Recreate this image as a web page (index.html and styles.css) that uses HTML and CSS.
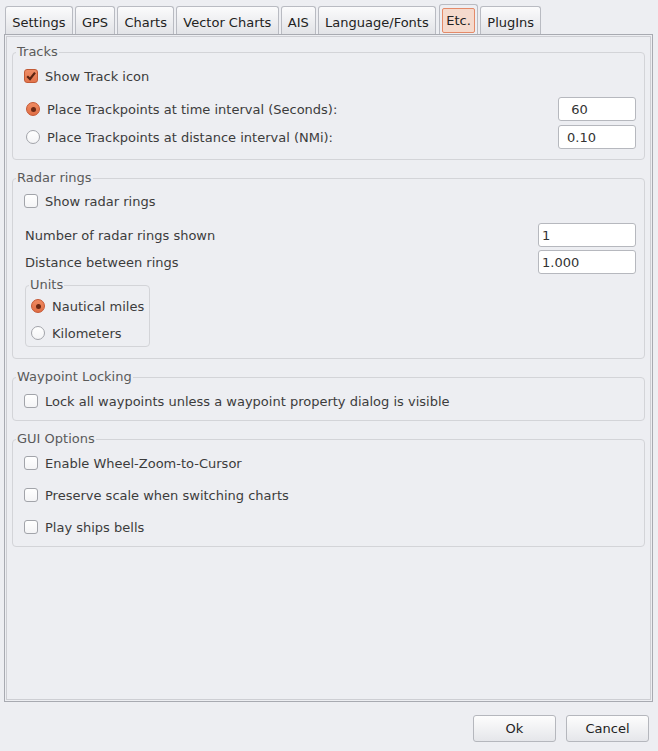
FILE: index.html
```html
<!DOCTYPE html>
<html>
<head>
<meta charset="utf-8">
<title>Options</title>
<link rel="stylesheet" href="styles.css">
</head>
<body>
<div class="dialog">
  <div class="tabs">
    <div class="tab">Settings</div>
    <div class="tab">GPS</div>
    <div class="tab">Charts</div>
    <div class="tab">Vector Charts</div>
    <div class="tab">AIS</div>
    <div class="tab">Language/Fonts</div>
    <div class="tab tab-active"><span class="tab-focus">Etc.</span></div>
    <div class="tab">PlugIns</div>
  </div>
  <div class="pane">
    <fieldset class="group group-tracks">
      <legend>Tracks</legend>
      <div class="gbody">
        <div class="row"><span class="cb cb-on"><svg viewBox="0 0 14 14" width="14" height="14"><path d="M3.2 7.2 L6 10 L11 3.6" fill="none" stroke="#5a2412" stroke-width="2.2"/></svg></span><span>Show Track icon</span></div>
        <div class="row row-field row-first">
          <div class="opt"><span class="rb rb-on"></span><span>Place Trackpoints at time interval (Seconds):</span></div>
          <div class="field field-track">&nbsp;60</div>
        </div>
        <div class="row row-field row-next">
          <div class="opt"><span class="rb"></span><span>Place Trackpoints at distance interval (NMi):</span></div>
          <div class="field field-track">0.10</div>
        </div>
      </div>
    </fieldset>

    <fieldset class="group group-radar">
      <legend>Radar rings</legend>
      <div class="gbody">
        <div class="row"><span class="cb"></span><span>Show radar rings</span></div>
        <div class="row row-field row-first-radar">
          <span class="plain">Number of radar rings shown</span>
          <div class="field field-radar">1</div>
        </div>
        <div class="row row-field row-next-radar">
          <span class="plain">Distance between rings</span>
          <div class="field field-radar">1.000</div>
        </div>
        <fieldset class="group units">
          <legend>Units</legend>
          <div class="ubody">
            <div class="row"><span class="rb rb-on"></span><span>Nautical miles</span></div>
            <div class="row row-units-next"><span class="rb"></span><span>Kilometers</span></div>
          </div>
        </fieldset>
      </div>
    </fieldset>

    <fieldset class="group group-wp">
      <legend>Waypoint Locking</legend>
      <div class="gbody">
        <div class="row"><span class="cb"></span><span>Lock all waypoints unless a waypoint property dialog is visible</span></div>
      </div>
    </fieldset>

    <fieldset class="group group-gui">
      <legend>GUI Options</legend>
      <div class="gbody gui-body">
        <div class="row"><span class="cb"></span><span>Enable Wheel-Zoom-to-Cursor</span></div>
        <div class="row"><span class="cb"></span><span>Preserve scale when switching charts</span></div>
        <div class="row"><span class="cb"></span><span>Play ships bells</span></div>
      </div>
    </fieldset>
  </div>
  <div class="footer">
    <button class="btn">Ok</button>
    <button class="btn">Cancel</button>
  </div>
</div>
</body>
</html>
```

FILE: styles.css
```css
* { box-sizing: border-box; }
html, body { margin: 0; padding: 0; }
body {
  width: 658px;
  height: 751px;
  overflow: hidden;
  background: #edeef2;
  font-family: "DejaVu Sans", sans-serif;
  font-size: 13px;
  line-height: 15px;
  color: #3c3c3c;
}
.dialog {
  display: flex;
  flex-direction: column;
  height: 751px;
  padding: 4px 5px 0 4px;
}

/* tabs */
.tabs {
  display: flex;
  align-items: flex-end;
  gap: 2px;
  height: 30px;
  padding-left: 1px;
}
.tab {
  height: 28px;
  padding: 8px 6.2px 0;
  border: 1px solid #b9bbc2;
  border-bottom: none;
  border-radius: 3px 3px 0 0;
  background: linear-gradient(#fbfbfc, #e2e3e7);
  color: #222222;
  white-space: nowrap;
}
.tab-active {
  height: 30px;
  padding: 3px 2px 0;
  margin-left: 1px;
  background: #edeef2;
}
.tab-focus {
  display: block;
  height: 25px;
  padding: 4px 3.3px 0;
  border: 1px solid #e48a69;
  border-radius: 2px;
  background: #f5dacd;
}

/* pane */
.pane {
  height: 668px;
  border: 1px solid #a8aab1;
  box-shadow: inset 0 0 0 1px #edeef2, inset 0 0 0 2px #cdced3;
  padding: 9px 7px 0;
  display: flex;
  flex-direction: column;
  gap: 10px;
}

/* group boxes */
.group {
  margin: 0;
  padding: 0;
  min-width: 0;
  border: 1px solid #d3d4d8;
  border-radius: 4px;
}
.group > legend {
  margin-left: 3px;
  padding: 0 1px 2px;
  color: #5a5a5a;
  line-height: 15px;
}
.gbody {
  display: flex;
  flex-direction: column;
  padding: 3px 8px 10px 11px;
}
.group-radar .gbody { padding-top: 2px; padding-bottom: 11px; }
.group-wp .gbody { padding-top: 3px; padding-bottom: 7px; }
.gui-body { padding-top: 3px; padding-bottom: 7px; gap: 8px; }

.row {
  display: flex;
  align-items: center;
  height: 24px;
  white-space: nowrap;
}
.row-field { justify-content: space-between; }
.row-first { margin-top: 9px; }
.row-next { margin-top: 4px; }
.row-first-radar { margin-top: 10px; }
.row-next-radar { margin-top: 3px; }
.opt { display: flex; align-items: center; }
.plain { padding-left: 1px; }

/* checkbox */
.cb {
  width: 14px;
  height: 14px;
  flex: none;
  margin-right: 7px;
  border: 1px solid #a2a4aa;
  border-radius: 3px;
  background: linear-gradient(#ffffff, #f4f4f6);
  position: relative;
}
.cb-on {
  border-color: #c25a35;
  background: linear-gradient(#ee8d66, #e2744c);
}
.cb svg { position: absolute; left: -1px; top: -1px; display: block; }

/* radio */
.rb {
  width: 14px;
  height: 14px;
  flex: none;
  margin-left: 2px;
  margin-right: 7px;
  border: 1px solid #a2a4aa;
  border-radius: 50%;
  background: linear-gradient(#ffffff, #f4f4f6);
  display: flex;
  align-items: center;
  justify-content: center;
}
.rb-on {
  border-color: #c55632;
  background: linear-gradient(#ef8a61, #e06e45);
}
.rb-on::after {
  content: "";
  width: 5px;
  height: 5px;
  border-radius: 50%;
  background: #6a2814;
}

/* text fields */
.field {
  height: 24px;
  border: 1px solid #b6b8be;
  border-radius: 3px;
  background: #ffffff;
  color: #333333;
  padding-top: 4px;
  white-space: pre;
}
.field-track { width: 78px; padding-left: 8px; }
.field-radar { width: 98px; padding-left: 3px; }

/* units sub group */
.units {
  width: 125px;
  margin-top: 3px;
  margin-left: 1px;
}
.ubody {
  display: flex;
  flex-direction: column;
  padding: 0 4px 1px 3px;
}
.row-units-next { margin-top: 3px; }

/* footer */
.footer {
  display: flex;
  justify-content: flex-end;
  gap: 10px;
  margin-top: 13px;
  padding-right: 4px;
}
.btn {
  width: 83px;
  height: 27px;
  padding: 0;
  border: 1px solid #b5b7bd;
  border-radius: 3px;
  background: linear-gradient(#fdfdfd, #e5e6ea);
  font-family: "DejaVu Sans", sans-serif;
  font-size: 13px;
  color: #222222;
}
```
